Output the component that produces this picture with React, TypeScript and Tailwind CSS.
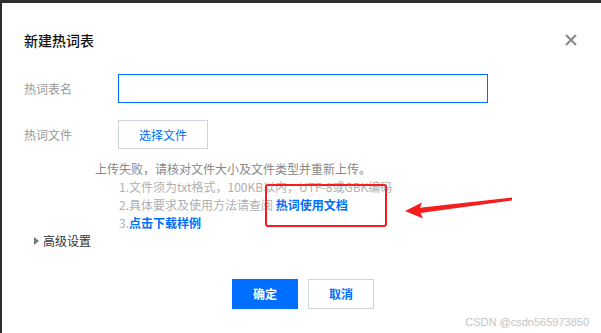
import React from 'react';

const font = { fontFamily: '"Noto Sans CJK SC", "Noto Sans", sans-serif' };

export default function App() {
  return (
    <div className="w-[601px] h-[333px] bg-[#2e2e2e] flex overflow-hidden" style={font}>
      <div className="relative ml-[2px] mt-[3px] flex-1 bg-white px-[22px]">
        {/* Header */}
        <div className="pt-[28px] flex items-center justify-between h-[46px]">
          <h1 className="text-[14px] leading-[18px] text-[#111] font-medium">新建热词表</h1>
          <button className="w-[12px] h-[12px] mr-[2px] text-[#888]">
            <svg viewBox="0 0 12 12" className="w-[12px] h-[12px]" fill="none" stroke="currentColor" strokeWidth="2">
              <path d="M1 1L11 11M11 1L1 11" />
            </svg>
          </button>
        </div>

        {/* Name row */}
        <div className="mt-[25px] flex items-center h-[29px]">
          <span className="w-[94px] text-[12px] text-[#999]">热词表名</span>
          <input className="w-[370px] h-[29px] border border-[#006eff] outline-none px-2 text-[12px]" />
        </div>

        {/* File row */}
        <div className="mt-[17px] flex items-center h-[29px]">
          <span className="w-[94px] text-[12px] text-[#999]">热词文件</span>
          <button className="w-[90px] h-[29px] border border-[#cfd5de] text-[12px] text-[#006eff]">选择文件</button>
        </div>

        {/* Error hint */}
        <div className="mt-[11px] text-[12px] leading-[18px]">
          <div className="pl-[71px] text-[#888]">上传失败，请核对文件大小及文件类型并重新上传。</div>
          <div className="pl-[95px] text-[#b0b0b0]">1.文件须为txt格式，100KB以内，UTF-8或GBK编码</div>
          <div className="pl-[95px] text-[#b0b0b0]">
            2.具体要求及使用方法请查阅 <span className="text-[#006eff] font-bold">热词使用文档</span>
          </div>
          <div className="pl-[95px] text-[#b0b0b0]">
            3.<span className="text-[#006eff] font-bold">点击下载样例</span>
          </div>
        </div>

        {/* Advanced */}
        <div className="h-[18px] flex items-center pl-[10px] gap-[4px] text-[12px] text-[#333]">
          <svg viewBox="0 0 5 8" className="w-[5px] h-[8px]" fill="#777">
            <path d="M0 0L5 4L0 8Z" />
          </svg>
          <span>高级设置</span>
        </div>

        {/* Footer buttons */}
        <div className="mt-[29px] flex justify-center gap-[10px] pl-[3px]">
          <button className="w-[66px] h-[30px] bg-[#006eff] text-white text-[12px] font-bold">确定</button>
          <button className="w-[66px] h-[30px] border border-[#cfd5de] text-[#006eff] text-[12px] font-bold">取消</button>
        </div>

        {/* annotation box */}
        <div className="absolute left-[263px] top-[181px] w-[122px] h-[43px] border-2 border-[#f51d1d] rounded-[3px]" />

        {/* annotation arrow */}
        <svg className="absolute left-[403px] top-[194px]" width="112" height="24" viewBox="405 197 112 24">
          <path d="M405 211 L422 202.5 L420 207.8 L512 197.5 L512 200.5 L420.5 213 L423 218.5 Z" fill="#f51d1d" />
        </svg>

        {/* watermark */}
        <span className="absolute right-[12px] bottom-[5px] text-[11px] leading-[12px] text-[#c4c4c4]" style={{ fontFamily: '"Liberation Sans", sans-serif' }}>
          CSDN @csdn565973850
        </span>
      </div>
    </div>
  );
}
